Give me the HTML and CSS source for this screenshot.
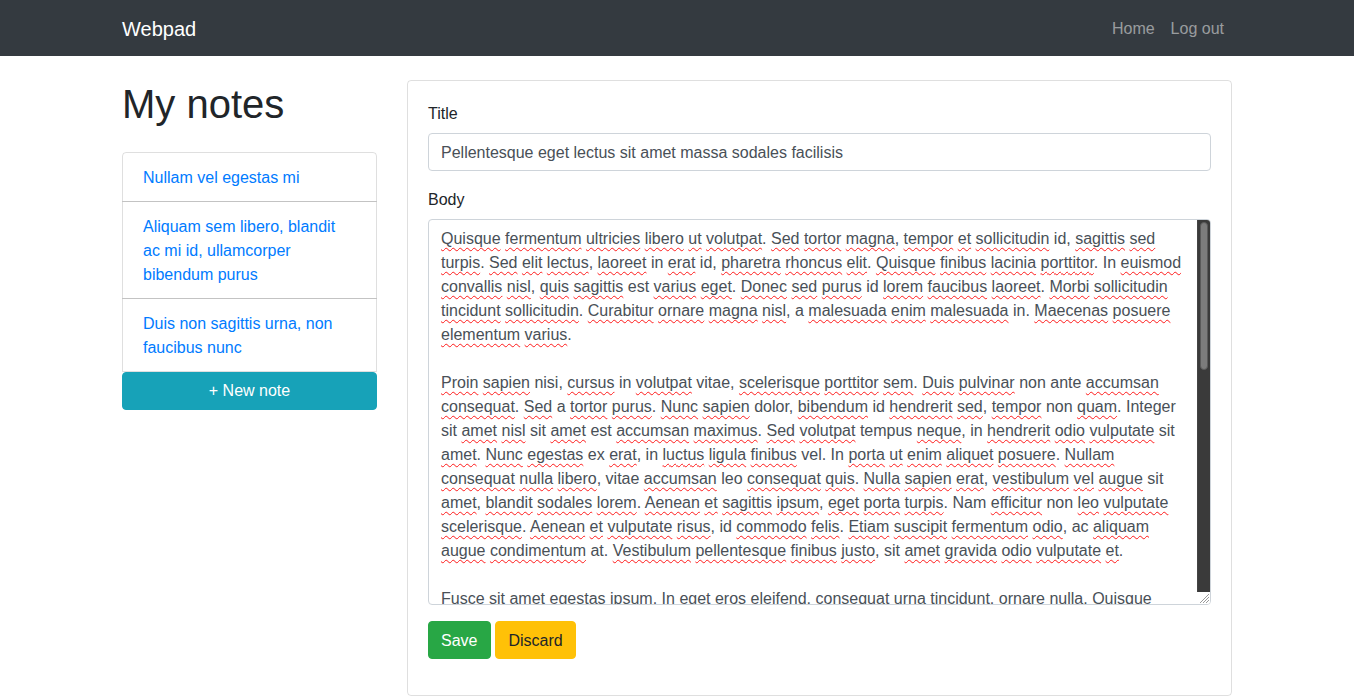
FILE: index.html
```html
<!DOCTYPE html>
<html lang="en">
<head>
<meta charset="utf-8">
<title>Webpad</title>
<link rel="stylesheet" href="styles.css">
</head>
<body>
<nav class="navbar">
  <div class="container nav-inner">
    <a class="brand" href="#">Webpad</a>
    <div class="nav-links">
      <a class="nav-link" href="#">Home</a>
      <a class="nav-link" href="#">Log out</a>
    </div>
  </div>
</nav>
<main class="container page">
  <div class="row">
    <aside class="col-side">
      <h1 class="page-title">My notes</h1>
      <div class="list-group">
        <a class="list-item" href="#">Nullam vel egestas mi</a>
        <a class="list-item" href="#">Aliquam sem libero, blandit ac mi id, ullamcorper bibendum purus</a>
        <a class="list-item" href="#">Duis non sagittis urna, non faucibus nunc</a>
      </div>
      <a class="btn btn-info btn-block" href="#">+ New note</a>
    </aside>
    <section class="col-main">
      <div class="card">
        <form class="card-body">
          <div class="form-group">
            <label class="form-label">Title</label>
            <div class="form-control">Pellentesque eget lectus sit amet massa sodales facilisis</div>
          </div>
          <div class="form-group">
            <label class="form-label">Body</label>
            <div class="editor">
              <div class="editor-text">
                <p class="para"><u>Quisque</u> <u>fermentum</u> <u>ultricies</u> <u>libero</u> <u>ut</u> <u>volutpat</u>. <u>Sed</u> <u>tortor</u> <u>magna</u>, <u>tempor</u> <u>et</u> <u>sollicitudin</u> id, <u>sagittis</u> <u>sed</u> <u>turpis</u>. <u>Sed</u> <u>elit</u> <u>lectus</u>, <u>laoreet</u> in <u>erat</u> id, <u>pharetra</u> <u>rhoncus</u> <u>elit</u>. <u>Quisque</u> <u>finibus</u> <u>lacinia</u> <u>porttitor</u>. In <u>euismod</u> <u>convallis</u> <u>nisl</u>, <u>quis</u> <u>sagittis</u> est <u>varius</u> <u>eget</u>. <u>Donec</u> <u>sed</u> <u>purus</u> id <u>lorem</u> <u>faucibus</u> <u>laoreet</u>. <u>Morbi</u> <u>sollicitudin</u> <u>tincidunt</u> <u>sollicitudin</u>. <u>Curabitur</u> <u>ornare</u> <u>magna</u> <u>nisl</u>, a <u>malesuada</u> <u>enim</u> <u>malesuada</u> in. <u>Maecenas</u> <u>posuere</u> <u>elementum</u> <u>varius</u>.</p>
                <p class="para"><u>Proin</u> <u>sapien</u> nisi, <u>cursus</u> in <u>volutpat</u> vitae, <u>scelerisque</u> <u>porttitor</u> <u>sem</u>. <u>Duis</u> <u>pulvinar</u> non ante <u>accumsan</u> <u>consequat</u>. <u>Sed</u> a <u>tortor</u> <u>purus</u>. <u>Nunc</u> <u>sapien</u> dolor, <u>bibendum</u> id <u>hendrerit</u> <u>sed</u>, <u>tempor</u> non <u>quam</u>. Integer sit <u>amet</u> <u>nisl</u> sit <u>amet</u> est <u>accumsan</u> <u>maximus</u>. <u>Sed</u> <u>volutpat</u> tempus <u>neque</u>, in <u>hendrerit</u> <u>odio</u> <u>vulputate</u> sit <u>amet</u>. <u>Nunc</u> <u>egestas</u> ex <u>erat</u>, in <u>luctus</u> <u>ligula</u> <u>finibus</u> vel. In <u>porta</u> <u>ut</u> <u>enim</u> <u>aliquet</u> <u>posuere</u>. <u>Nullam</u> <u>consequat</u> <u>nulla</u> <u>libero</u>, vitae <u>accumsan</u> leo <u>consequat</u> <u>quis</u>. <u>Nulla</u> <u>sapien</u> <u>erat</u>, <u>vestibulum</u> <u>vel</u> <u>augue</u> sit <u>amet</u>, <u>blandit</u> <u>sodales</u> <u>lorem</u>. <u>Aenean</u> <u>et</u> <u>sagittis</u> <u>ipsum</u>, <u>eget</u> <u>porta</u> <u>turpis</u>. Nam <u>efficitur</u> non <u>leo</u> <u>vulputate</u> <u>scelerisque</u>. <u>Aenean</u> <u>et</u> <u>vulputate</u> <u>risus</u>, id <u>commodo</u> <u>felis</u>. <u>Etiam</u> <u>suscipit</u> <u>fermentum</u> <u>odio</u>, ac <u>aliquam</u> <u>augue</u> <u>condimentum</u> at. <u>Vestibulum</u> <u>pellentesque</u> <u>finibus</u> <u>justo</u>, sit <u>amet</u> <u>gravida</u> <u>odio</u> <u>vulputate</u> <u>et</u>.</p>
                <p class="para"><u>Fusce</u> sit <u>amet</u> <u>egestas</u> <u>ipsum</u>. In <u>eget</u> <u>eros</u> <u>eleifend</u>, <u>consequat</u> <u>urna</u> <u>tincidunt</u>, <u>ornare</u> <u>nulla</u>. <u>Quisque</u> <u>vehicula</u> <u>mauris</u> <u>eu</u> <u>orci</u> <u>pretium</u>, <u>sed</u> <u>feugiat</u> <u>lectus</u> <u>luctus</u>. <u>Praesent</u> <u>dictum</u> <u>nunc</u> non <u>dui</u> <u>placerat</u>, <u>eget</u> <u>bibendum</u> <u>metus</u> <u>lobortis</u>.</p>
              </div>
              <div class="scrollbar">
                <div class="track"><div class="thumb"></div></div>
                <div class="corner">
                  <svg class="grip" width="12" height="12" viewBox="0 0 12 12">
                    <path d="M11 2 L2 11 M11 5 L5 11 M11 8 L8 11" stroke="#9a9a9a" stroke-width="1" fill="none"/>
                  </svg>
                </div>
              </div>
            </div>
          </div>
          <div class="form-group actions">
            <button class="btn btn-success" type="button">Save</button>
            <button class="btn btn-warning" type="button">Discard</button>
          </div>
        </form>
      </div>
    </section>
  </div>
</main>
</body>
</html>
```
FILE: styles.css
```css
* { box-sizing: border-box; }

body {
  margin: 0;
  font-family: "Liberation Sans", Arial, Helvetica, sans-serif;
  font-size: 16px;
  line-height: 1.5;
  color: #212529;
  background: #fff;
}

a { text-decoration: none; }

.container {
  width: 100%;
  max-width: 1140px;
  margin: 0 auto;
  padding: 0 15px;
}

/* navbar */
.navbar {
  background: #343a40;
  height: 56px;
}
.nav-inner {
  height: 56px;
  display: flex;
  align-items: center;
  justify-content: space-between;
  padding-top: 1px;
}
.brand {
  color: #fff;
  font-size: 20px;
  line-height: 30px;
}
.nav-links {
  display: flex;
}
.nav-link {
  color: rgba(255, 255, 255, 0.5);
  padding: 8px;
  line-height: 24px;
}

/* page */
.page { margin-top: 24px; }
.row {
  display: flex;
  margin: 0 -15px;
}
.col-side {
  width: 25%;
  padding: 0 15px;
}
.col-main {
  width: 75%;
  padding: 0 15px;
}

.page-title {
  margin: 0 0 24px;
  font-size: 40px;
  line-height: 1.2;
  font-weight: 500;
}

.list-group {
  display: flex;
  flex-direction: column;
}
.list-item {
  display: block;
  padding: 13px 20px 11px;
  color: #007bff;
  border: 1px solid rgba(0, 0, 0, 0.125);
  margin-bottom: -1px;
}
.list-item:first-child {
  border-top-left-radius: 4px;
  border-top-right-radius: 4px;
}

.btn {
  display: inline-block;
  font-family: inherit;
  font-size: 16px;
  line-height: 24px;
  padding: 7px 12px 5px;
  border: 1px solid transparent;
  border-radius: 4px;
  text-align: center;
  cursor: pointer;
  vertical-align: middle;
}
.btn-block {
  display: block;
  width: 100%;
}
.btn-info {
  background: #17a2b8;
  border-color: #17a2b8;
  color: #fff;
  margin-top: 1px;
  padding-top: 6px;
  padding-bottom: 6px;
}
.btn-success {
  background: #28a745;
  border-color: #28a745;
  color: #fff;
  padding-right: 13px;
}
.btn-warning {
  background: #ffc107;
  border-color: #ffc107;
  color: #212529;
}

/* card */
.card {
  border: 1px solid rgba(0, 0, 0, 0.125);
  border-radius: 4px;
}
.card-body {
  padding: 20px;
  margin: 0;
}
.form-group { margin-bottom: 16px; }
.form-label {
  display: inline-block;
  padding-top: 1px;
  margin-bottom: 7px;
}
.form-control {
  display: block;
  width: 100%;
  height: 38px;
  padding: 7px 12px 5px;
  font-size: 16px;
  line-height: 24px;
  color: #495057;
  background: #fff;
  border: 1px solid #ced4da;
  border-radius: 4px;
  white-space: nowrap;
  overflow: hidden;
}

.editor {
  display: flex;
  height: 386px;
  border: 1px solid #ced4da;
  border-radius: 4px;
  overflow: hidden;
  background: #fff;
}
.editor-text {
  flex: 1;
  min-width: 0;
  padding: 7px 12px 0;
  color: #495057;
  line-height: 24px;
  overflow: hidden;
}
.para {
  margin: 0 0 24px;
}
.editor-text u {
  text-decoration: underline wavy #ff1a1a;
  text-decoration-thickness: 1px;
  text-underline-offset: 3px;
  text-decoration-skip-ink: none;
}

.scrollbar {
  width: 13px;
  flex: none;
  display: flex;
  flex-direction: column;
}
.track {
  flex: 1;
  background: #3a3a3a;
  border-left: 1px solid #444;
  padding: 2px 2px 0 2px;
}
.thumb {
  height: 148px;
  background: #7c7c7c;
  border-radius: 4px;
  border: 1px solid #5a5a5a;
}
.corner {
  height: 12px;
  background: #fff;
  display: flex;
  justify-content: flex-end;
  align-items: flex-end;
}
.grip { display: block; }

.actions { font-size: 0; }
.actions .btn + .btn { margin-left: 4px; }
```
